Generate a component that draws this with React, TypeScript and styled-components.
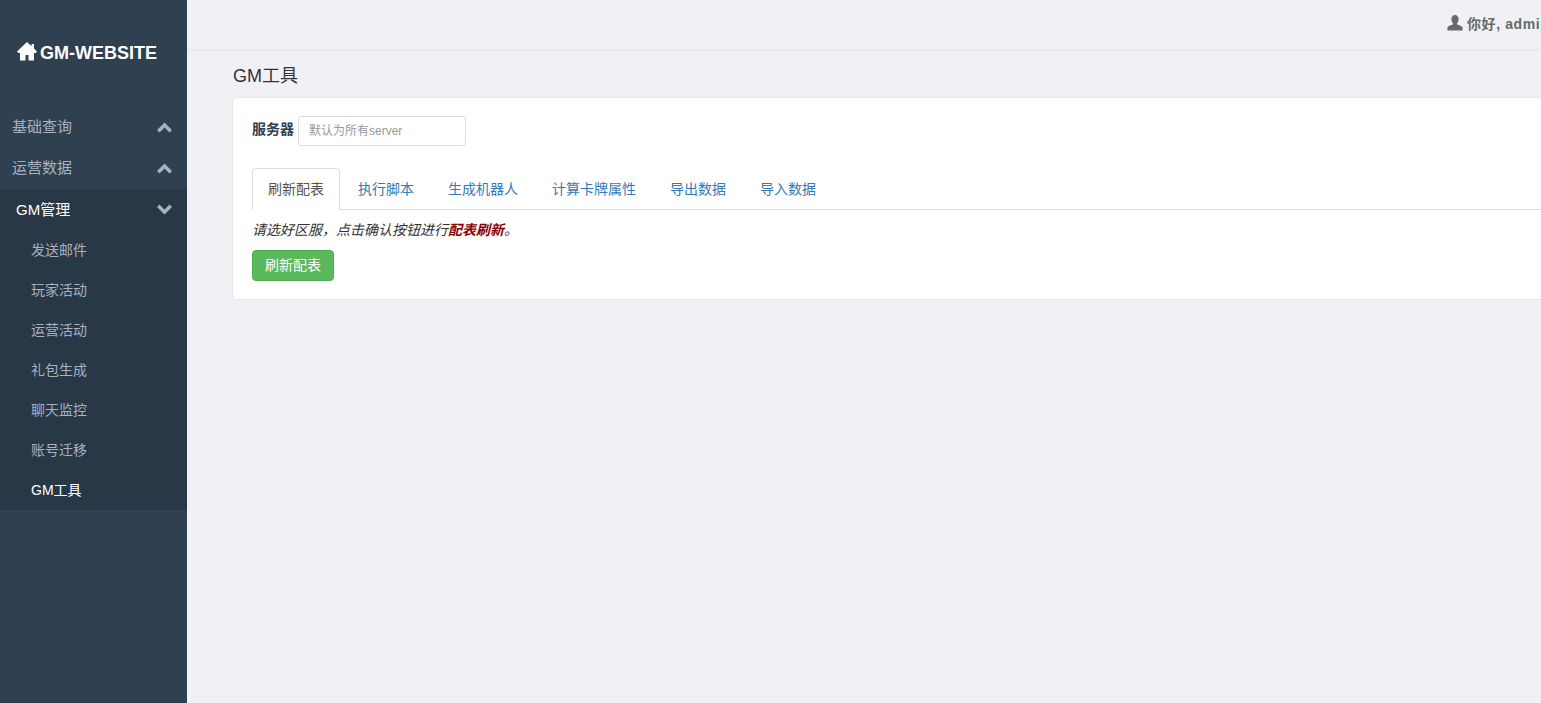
import React from "react";
import styled, { createGlobalStyle } from "styled-components";

const FONT = `"Liberation Sans", "Noto Sans CJK SC", sans-serif`;

const GlobalStyle = createGlobalStyle`
  html, body {
    margin: 0;
    padding: 0;
    height: 100%;
    overflow: hidden;
    background: #f1f1f5;
    font-family: ${FONT};
    font-size: 14px;
    color: #2f4050;
  }
  * {
    box-sizing: border-box;
  }
`;

const Page = styled.div`
  display: flex;
  width: 1541px;
  height: 703px;
  overflow: hidden;
`;

const Sidebar = styled.aside`
  flex: 0 0 187px;
  background: #2f4050;
`;

const Brand = styled.div`
  height: 107px;
  padding: 42px 0 0 17px;
  display: flex;
  align-items: flex-start;
  gap: 3px;
  color: #fff;
  font-size: 18px;
  font-weight: 700;
  line-height: 22px;
`;

const MenuItem = styled.div<{ $open?: boolean }>`
  height: 41px;
  padding-left: ${({ $open }) => ($open ? "16px" : "12px")};
  padding-right: 15px;
  display: flex;
  align-items: center;
  justify-content: space-between;
  font-size: 15px;
  line-height: 20px;
  color: ${({ $open }) => ($open ? "#fff" : "#a7b1c2")};
`;

const MenuLabel = styled.span<{ $open?: boolean }>`
  padding-bottom: ${({ $open }) => ($open ? "0" : "2px")};
`;

const SubMenu = styled.div`
  background: #293846;
`;

const SubItem = styled.div<{ $active?: boolean }>`
  height: 40px;
  padding-left: 31px;
  display: flex;
  align-items: center;
  font-size: 14px;
  line-height: 18px;
  color: ${({ $active }) => ($active ? "#fff" : "#a7b1c2")};
`;

const Main = styled.main`
  flex: 0 0 1400px;
  display: flex;
  flex-direction: column;
`;

const TopBar = styled.header`
  height: 51px;
  flex: none;
  padding: 15px 0 0 1260px;
  border-bottom: 2px solid #e7eaec;
  display: flex;
  align-items: flex-start;
  gap: 4px;
  font-size: 14px;
  line-height: 19px;
  font-weight: 700;
  color: #676a6c;
  white-space: nowrap;
`;

const UserName = styled.span`
  letter-spacing: 0.6px;
`;

const Content = styled.div`
  padding: 14px 0 0 45px;
`;

const Title = styled.h1`
  margin: 0 0 9px 1px;
  font-size: 18px;
  font-weight: 400;
  line-height: 23px;
  color: #333;
`;

const Panel = styled.section`
  background: #fff;
  border: 1px solid #e7e7ea;
  border-radius: 4px;
  height: 203px;
  padding: 18px 19px 0;
`;

const ServerRow = styled.div`
  display: flex;
  align-items: center;
  gap: 4px;
`;

const Label = styled.label`
  display: block;
  font-size: 14px;
  line-height: 20px;
  height: 20px;
  margin-top: -5px;
  font-weight: 700;
  color: #2f4050;
`;

const ServerInput = styled.input`
  width: 168px;
  height: 30px;
  padding: 0 10px;
  border: 1px solid #ddd;
  border-radius: 3px;
  font-family: ${FONT};
  font-size: 12px;
  outline: none;
  &::placeholder {
    color: #999;
    opacity: 1;
  }
`;

const Tabs = styled.ul`
  list-style: none;
  margin: 22px 0 0;
  padding: 0;
  height: 42px;
  display: flex;
  border-bottom: 1px solid #ddd;
`;

const Tab = styled.li<{ $active?: boolean }>`
  height: 42px;
  padding: 0 15px 1px;
  margin-right: 2px;
  display: flex;
  align-items: center;
  font-size: 14px;
  line-height: 20px;
  color: ${({ $active }) => ($active ? "#555" : "#337ab7")};
  background: ${({ $active }) => ($active ? "#fff" : "transparent")};
  border: 1px solid ${({ $active }) => ($active ? "#ddd" : "transparent")};
  border-bottom-color: ${({ $active }) => ($active ? "#fff" : "transparent")};
  border-radius: 4px 4px 0 0;
`;

const Hint = styled.p`
  margin: 10px 0 0;
  font-size: 14px;
  line-height: 20px;
  font-style: italic;
  color: #333;
`;

const Strong = styled.strong`
  color: #8b0000;
`;

const GreenButton = styled.button`
  display: block;
  margin-top: 10px;
  width: 82px;
  height: 31px;
  padding: 0 0 2px;
  border: 1px solid #4cae4c;
  border-radius: 4px;
  background: #5cb85c;
  color: #fff;
  font-family: ${FONT};
  font-size: 14px;
  line-height: 20px;
`;

const Chevron = ({ up }: { up?: boolean }) => (
  <svg width="15" height="11" viewBox="0 0 15 11" fill="#a7b1c2">
    <path
      d={
        up
          ? "M7.500 .5 15 8 12.500 10.500 7.500 5.500 2.500 10.500 0 8z"
          : "M7.500 10.500 15 3 12.500 .5 7.500 5.500 2.500 .5 0 3z"
      }
    />
  </svg>
);

const HomeIcon = () => (
  <svg width="20" height="19" viewBox="0 0 20 19" fill="#fff">
    <path d="M10 0 0 9.500 1.200 11H3v7.500h5.500v-5.500h3v5.500H17V11h1.800L20 9.500 17 6.500V2h-2.500v2.200z" />
  </svg>
);

const UserIcon = () => (
  <svg width="16" height="16" viewBox="0 0 16 16" fill="#676a6c">
    <path d="M8 0c2.300 0 3.600 1.700 3.600 4 0 1.700-.7 3.300-1.600 4.200v1.300c2 .6 5.200 1.600 5.600 3V15.500H.4v-3c.4-1.400 3.600-2.400 5.600-3V8.200C5.100 7.300 4.400 5.700 4.400 4 4.400 1.700 5.700 0 8 0z" />
  </svg>
);

const subItems = ["发送邮件", "玩家活动", "运营活动", "礼包生成", "聊天监控", "账号迁移", "GM工具"];
const tabs = ["刷新配表", "执行脚本", "生成机器人", "计算卡牌属性", "导出数据", "导入数据"];

export default function App() {
  return (
    <Page>
      <GlobalStyle />
      <Sidebar>
        <Brand>
          <HomeIcon />
          GM-WEBSITE
        </Brand>
        <MenuItem>
          <MenuLabel>基础查询</MenuLabel>
          <Chevron up />
        </MenuItem>
        <MenuItem>
          <MenuLabel>运营数据</MenuLabel>
          <Chevron up />
        </MenuItem>
        <SubMenu>
          <MenuItem $open>
            <MenuLabel $open>GM管理</MenuLabel>
            <Chevron />
          </MenuItem>
          {subItems.map((item) => (
            <SubItem key={item} $active={item === "GM工具"}>
              {item}
            </SubItem>
          ))}
        </SubMenu>
      </Sidebar>
      <Main>
        <TopBar>
          <UserIcon />
          <UserName>你好, admin</UserName>
        </TopBar>
        <Content>
          <Title>GM工具</Title>
          <Panel>
            <ServerRow>
              <Label>服务器</Label>
              <ServerInput placeholder="默认为所有server" />
            </ServerRow>
            <Tabs>
              {tabs.map((tab, i) => (
                <Tab key={tab} $active={i === 0}>
                  {tab}
                </Tab>
              ))}
            </Tabs>
            <Hint>
              请选好区服，点击确认按钮进行<Strong>配表刷新</Strong>。
            </Hint>
            <GreenButton>刷新配表</GreenButton>
          </Panel>
        </Content>
      </Main>
    </Page>
  );
}
